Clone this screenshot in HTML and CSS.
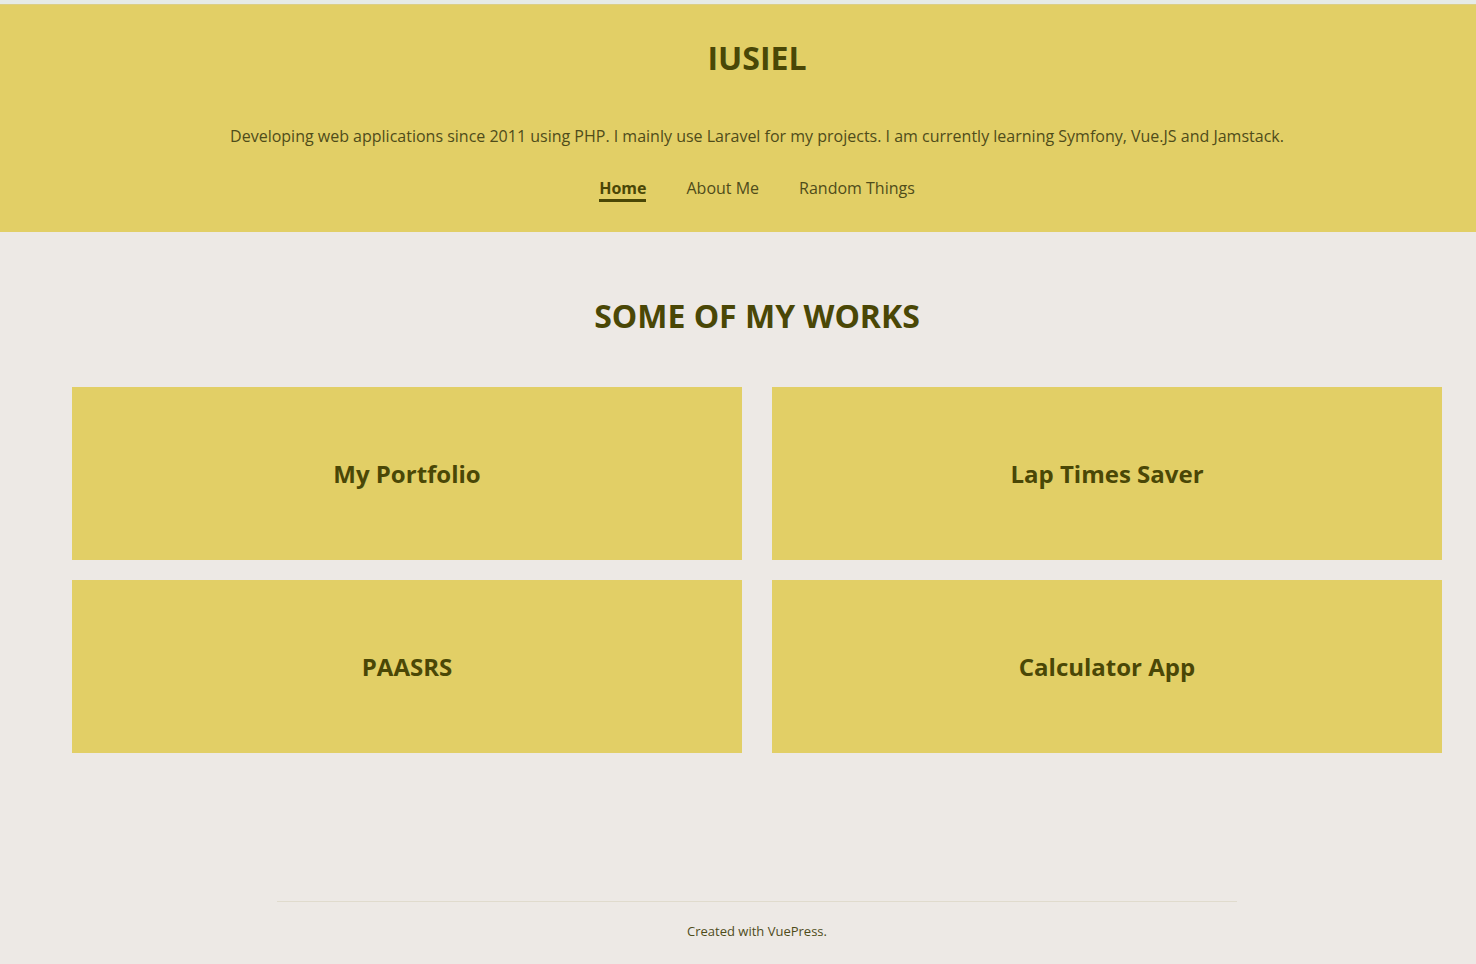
FILE: index.html
```html
<!DOCTYPE html>
<html lang="en">
<head>
<meta charset="utf-8">
<title>IUSIEL</title>
<link rel="stylesheet" href="styles.css">
</head>
<body>
<div class="topstrip"></div>
<header class="hero">
  <div class="shift">
    <h1 class="site-title">IUSIEL</h1>
    <p class="tagline">Developing web applications since 2011 using PHP. I mainly use Laravel for my projects. I am currently learning Symfony, Vue.JS and Jamstack.</p>
    <nav class="nav">
      <a class="nav-link active" href="#">Home</a>
      <a class="nav-link" href="#">About Me</a>
      <a class="nav-link" href="#">Random Things</a>
    </nav>
  </div>
</header>
<main class="shift main">
  <h2 class="works-title">SOME OF MY WORKS</h2>
  <div class="grid">
    <a class="card" href="#">My Portfolio</a>
    <a class="card" href="#">Lap Times Saver</a>
    <a class="card" href="#">PAASRS</a>
    <a class="card" href="#">Calculator App</a>
  </div>
</main>
<footer class="shift footer">
  <div class="footer-inner">Created with VuePress.</div>
</footer>
</body>
</html>
```
FILE: styles.css
```css
html, body {
  margin: 0;
  padding: 0;
}
body {
  background: #ede9e5;
  font-family: "Open Sans", "Noto Sans", sans-serif;
  color: #4a4706;
  width: 1476px;
  height: 964px;
  overflow: hidden;
}
.topstrip {
  height: 4px;
  background: #e6ebe7;
  border-bottom: 1px solid #dccf86;
}
.hero {
  background: #e2cf66;
  height: 227px;
  box-sizing: border-box;
  padding-top: 32px;
  text-align: center;
}
.shift {
  margin-left: 38px;
}
.site-title {
  margin: 0;
  font-size: 32px;
  line-height: 42px;
  font-weight: 700;
  color: #4a4706;
}
.tagline {
  margin: 44px 0 0;
  font-size: 16px;
  line-height: 26px;
  color: #4f4c1a;
}
.nav {
  margin-top: 28px;
  display: flex;
  justify-content: center;
  gap: 40px;
}
.nav-link {
  font-size: 16px;
  line-height: 22px;
  color: #4f4c1a;
  text-decoration: none;
  border-bottom: 3px solid transparent;
}
.nav-link.active {
  font-weight: 700;
  color: #4a4706;
  border-bottom-color: #4a4706;
}
.main {
  padding: 0 34px;
}
.works-title {
  margin: 63px 0 0;
  text-align: center;
  font-size: 32px;
  line-height: 42px;
  font-weight: 700;
  color: #4a4706;
}
.grid {
  margin-top: 50px;
  display: grid;
  grid-template-columns: 1fr 1fr;
  column-gap: 30px;
  row-gap: 20px;
}
.card {
  height: 173px;
  background: #e2cf66;
  display: flex;
  align-items: center;
  justify-content: center;
  font-size: 24px;
  font-weight: 700;
  color: #4a4706;
  text-decoration: none;
}
.footer {
  margin-top: 148px;
  display: flex;
  justify-content: center;
}
.footer-inner {
  width: 960px;
  border-top: 1px solid #e0dbcd;
  padding-top: 19px;
  text-align: center;
  font-size: 13px;
  line-height: 20px;
  color: #4f4c1a;
}
```
